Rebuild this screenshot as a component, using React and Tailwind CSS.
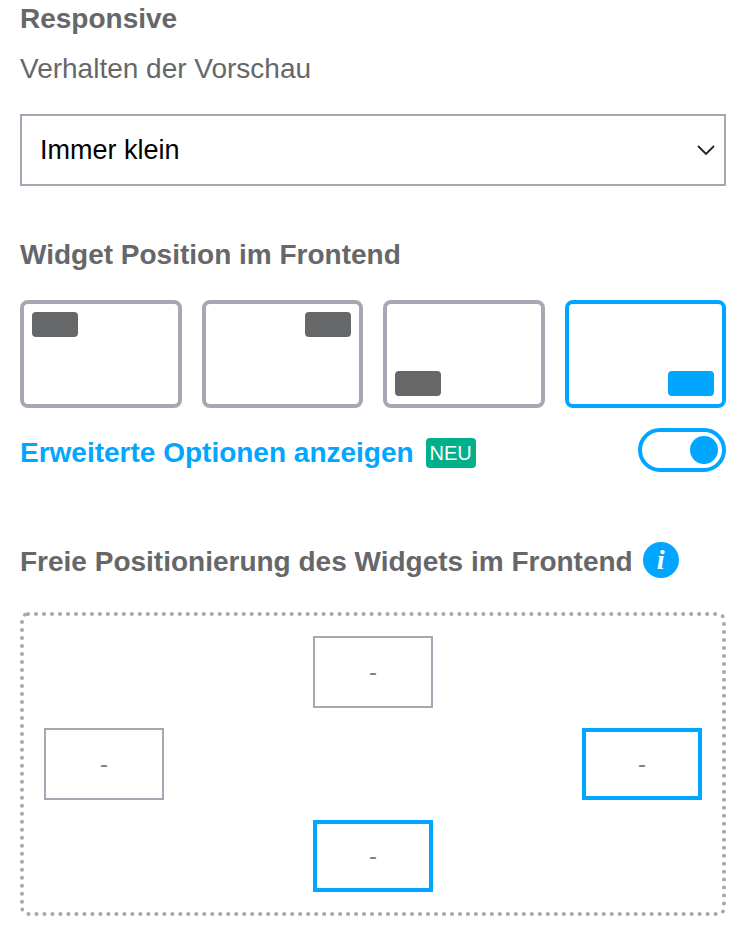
export default function App() {
  return (
    <div className="w-[747px] h-[938px] bg-white overflow-hidden pl-5 pr-[21px] font-['Liberation_Sans',Arial,sans-serif] text-[#666769]">
      <div className="text-[28px] leading-[30px] font-bold mt-1">Responsive</div>
      <div className="text-[28px] leading-[30px] mt-5">Verhalten der Vorschau</div>
      <div className="mt-[30px] h-[72px] border-2 border-[#a5a8b3] flex items-center justify-between pl-[18px] pr-2 text-[27px] text-black">
        <span>Immer klein</span>
        <svg width="20" height="12" viewBox="0 0 20 12" fill="none" stroke="#222" strokeWidth="1.8"><path d="M2 2l8 8 8-8" /></svg>
      </div>
      <div className="text-[28px] leading-[30px] font-bold mt-[54px]">Widget Position im Frontend</div>
      <div className="grid grid-cols-4 gap-5 mt-[30px]">
        <div className="h-[108px] border-4 border-[#a5a8b3] rounded-lg p-2 flex items-start justify-start bg-white"><div className="w-[46px] h-[25px] rounded bg-[#666769]" /></div>
        <div className="h-[108px] border-4 border-[#a5a8b3] rounded-lg p-2 flex items-start justify-end bg-white"><div className="w-[46px] h-[25px] rounded bg-[#666769]" /></div>
        <div className="h-[108px] border-4 border-[#a5a8b3] rounded-lg p-2 flex items-end justify-start bg-white"><div className="w-[46px] h-[25px] rounded bg-[#666769]" /></div>
        <div className="h-[108px] border-4 border-[#00a6ff] rounded-lg p-2 flex items-end justify-end bg-white"><div className="w-[46px] h-[25px] rounded bg-[#00a6ff]" /></div>
      </div>
      <div className="flex items-center justify-between mt-5 h-[44px]">
        <div className="flex items-center gap-3 pt-[6px]">
          <span className="text-[28px] leading-[30px] font-bold text-[#00a6ff]">Erweiterte Optionen anzeigen</span>
          <span className="w-[50px] h-[30px] rounded bg-[#00b08a] text-white text-[20px] flex items-center justify-center">NEU</span>
        </div>
        <div className="w-[88px] h-[44px] rounded-full border-4 border-[#00a6ff] flex items-center justify-end pr-1">
          <div className="w-7 h-7 rounded-full bg-[#00a6ff]" />
        </div>
      </div>
      <div className="flex items-center gap-[10px] mt-[70px] h-9">
        <span className="text-[28px] leading-[30px] font-bold pt-[4px]">Freie Positionierung des Widgets im Frontend</span>
        <span className="w-9 h-9 rounded-full bg-[#00a6ff] text-white flex items-center justify-center text-[28px] italic font-bold font-['Liberation_Serif',serif]">i</span>
      </div>
      <div className="mt-[34px] h-[304px] border-4 border-dotted border-[#a5a8b3] rounded-lg px-5 pt-5 flex flex-col gap-5">
        <div className="flex justify-center">
          <div className="w-[120px] h-[72px] border-2 border-[#a5a8b3] flex items-center justify-center text-2xl text-[#808080]">-</div>
        </div>
        <div className="flex justify-between">
          <div className="w-[120px] h-[72px] border-2 border-[#a5a8b3] flex items-center justify-center text-2xl text-[#808080]">-</div>
          <div className="w-[120px] h-[72px] border-4 border-[#00a6ff] flex items-center justify-center text-2xl text-[#808080]">-</div>
        </div>
        <div className="flex justify-center">
          <div className="w-[120px] h-[72px] border-4 border-[#00a6ff] flex items-center justify-center text-2xl text-[#808080]">-</div>
        </div>
      </div>
    </div>
  );
}
